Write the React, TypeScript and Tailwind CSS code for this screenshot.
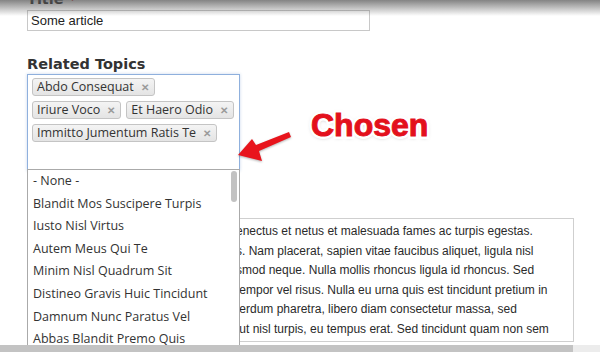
import React from "react";

const tags1 = ["Abdo Consequat"];
const tags2 = ["Iriure Voco", "Et Haero Odio"];
const tags3 = ["Immitto Jumentum Ratis Te"];

const options = [
  "- None -",
  "Blandit Mos Suscipere Turpis",
  "Iusto Nisl Virtus",
  "Autem Meus Qui Te",
  "Minim Nisl Quadrum Sit",
  "Distineo Gravis Huic Tincidunt",
  "Damnum Nunc Paratus Vel",
  "Abbas Blandit Premo Quis",
];

const lines = [
  "enectus et netus et malesuada fames ac turpis egestas.",
  "s. Nam placerat, sapien vitae faucibus aliquet, ligula nisl",
  "smod neque. Nulla mollis rhoncus ligula id rhoncus. Sed",
  "tempor vel risus. Nulla eu urna quis est tincidunt pretium in",
  "terdum pharetra, libero diam consectetur massa, sed",
  "\u00a0ut nisl turpis, eu tempus erat. Sed tincidunt quam non sem",
];

const uiFont = '"Open Sans", "Noto Sans", sans-serif';
const labelFont = '"DejaVu Sans", "Open Sans", sans-serif';

function Tag({ label }: { label: string }) {
  return (
    <div className="flex h-[18px] shrink-0 items-center whitespace-nowrap rounded-[3px] border border-[#c4c4c4] bg-gradient-to-b from-[#f4f4f4] to-[#e4e4e4] pl-[4px] pr-[5px] text-[12.5px] leading-none text-[#333]">
      <span>{label}</span>
      <span className="ml-[7px] text-[10px] font-bold text-[#9a9a9a]">✕</span>
    </div>
  );
}

export default function App() {
  return (
    <div
      className="relative h-[352px] w-[600px] overflow-hidden bg-white"
      style={{ fontFamily: uiFont }}
    >
      {/* top shade */}
      <div className="pointer-events-none absolute left-0 top-0 z-10 h-[16px] w-full bg-gradient-to-b from-[rgba(90,90,90,0.75)] to-[rgba(255,255,255,0)]" />

      <div className="flex flex-col pl-[27px]">
        <div
          className="-mt-[10px] h-[18px] text-[14.5px] font-bold leading-[18px] text-[#222]"
          style={{ fontFamily: labelFont }}
        >
          Title <span className="text-[#d00]">*</span>
        </div>
        <div
          className="mt-[2px] flex h-[21px] w-[343px] items-center border border-[#c8c8c8] pl-[3px] text-[13px] text-[#222]"
          style={{ fontFamily: '"Liberation Sans", Arial, sans-serif' }}
        >
          Some article
        </div>

        <div
          className="mt-[24px] h-[18px] text-[14.5px] font-bold leading-[18px] text-[#333]"
          style={{ fontFamily: labelFont }}
        >
          Related Topics
        </div>
        <div className="mt-[1px] flex h-[97px] w-[213px] flex-col gap-[5px] border border-[#8fb0dd] pl-[4px] pt-[3px] shadow-[0_0_3px_rgba(80,130,200,0.3)]">
          <div className="flex gap-[5px]">
            {tags1.map((t) => (
              <Tag key={t} label={t} />
            ))}
          </div>
          <div className="flex gap-[5px]">
            {tags2.map((t) => (
              <Tag key={t} label={t} />
            ))}
          </div>
          <div className="flex gap-[5px]">
            {tags3.map((t) => (
              <Tag key={t} label={t} />
            ))}
          </div>
        </div>

        {/* textarea */}
        <div
          className="mt-[47px] flex h-[124px] w-[547px] flex-col border border-[#cfcfcf] pl-[208px] pt-[3px] text-[12px] leading-[19.5px] text-[#2a2a2a]"
          style={{ fontFamily: '"Liberation Sans", Arial, sans-serif' }}
        >
          {lines.map((l) => (
            <div key={l} className="whitespace-nowrap">
              {l}
            </div>
          ))}
        </div>
      </div>

      {/* bottom grippie bar */}
      <div className="absolute bottom-0 left-0 z-30 flex h-[7px] w-full">
        <div className="h-full w-[573px] bg-[#c3c3c3]" />
        <div className="h-full flex-1 bg-[#ececec]" />
      </div>

      {/* dropdown */}
      <div className="absolute left-[27px] top-[169px] z-20 h-[200px] w-[213px] border border-[#aaa] bg-white">
        <div className="flex flex-col pl-[5px] text-[12.5px] text-[#333]">
          {options.map((o) => (
            <div key={o} className="h-[22.6px] whitespace-nowrap leading-[22.6px]">
              {o}
            </div>
          ))}
        </div>
        <div className="absolute right-[2px] top-[1px] h-[31px] w-[6px] rounded-full bg-[#c2c2c2]" />
      </div>

      {/* annotation */}
      <div
        className="absolute left-[311px] top-[106px] z-20 text-[32px] font-bold leading-[38px]"
        style={{ fontFamily: '"Liberation Sans", Arial, sans-serif' }}
      >
        <span className="text-white [-webkit-text-stroke:6px_white] [text-shadow:0_1px_4px_rgba(0,0,0,0.5)]">
          Chosen
        </span>
        <span className="absolute left-0 top-0 text-[#e3101c] [-webkit-text-stroke:1px_#e3101c]">
          Chosen
        </span>
      </div>
      <svg
        className="absolute left-0 top-0 z-20"
        width="600"
        height="352"
        viewBox="0 0 600 352"
      >
        <polygon
          points="238,155 252,139 256,145 289,132 291,137 259,151 262,161"
          fill="#e8141c"
          style={{ filter: "drop-shadow(0 1px 1px rgba(0,0,0,0.3))" }}
        />
      </svg>
    </div>
  );
}
